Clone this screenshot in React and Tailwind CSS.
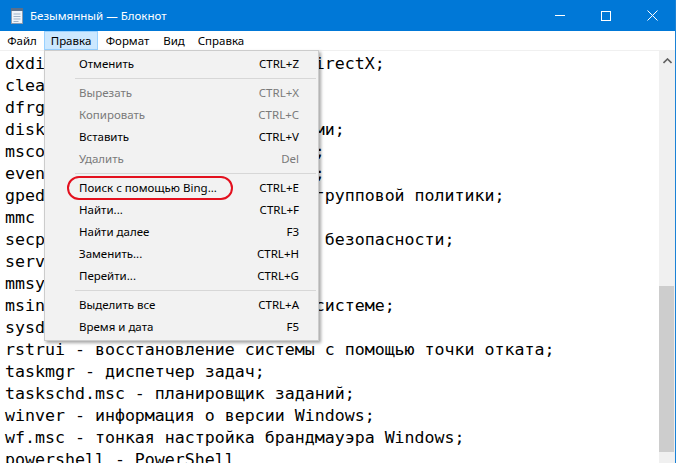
import React from 'react';

const lines = [
  'dxdiag - средство диагностики DirectX;',
  'cleanmgr - очистка диска;',
  'dfrgui - дефрагментация диска;',
  'diskmgmt.msc - управление дисками;',
  'msconfig - конфигурация системы;',
  'eventvwr.msc - просмотр событий;',
  'gpedit.msc - редактор объектов групповой политики;',
  'mmc - консоль управления;',
  'secpol.msc - локальная политика безопасности;',
  'services.msc - службы;',
  'mmsys.cpl - настройка звука;',
  'msinfo32 - просмотр сведений о системе;',
  'sysdm.cpl - свойства системы;',
  'rstrui - восстановление системы с помощью точки отката;',
  'taskmgr - диспетчер задач;',
  'taskschd.msc - планировщик заданий;',
  'winver - информация о версии Windows;',
  'wf.msc - тонкая настройка брандмауэра Windows;',
  'powershell - PowerShell',
];

const menu = [
  { label: 'Отменить', key: 'CTRL+Z' },
  { sep: true },
  { label: 'Вырезать', key: 'CTRL+X', off: true },
  { label: 'Копировать', key: 'CTRL+C', off: true },
  { label: 'Вставить', key: 'CTRL+V' },
  { label: 'Удалить', key: 'Del', off: true },
  { sep: true },
  { label: 'Поиск с помощью Bing...', key: 'CTRL+E' },
  { label: 'Найти...', key: 'CTRL+F' },
  { label: 'Найти далее', key: 'F3' },
  { label: 'Заменить...', key: 'CTRL+H' },
  { label: 'Перейти...', key: 'CTRL+G' },
  { sep: true },
  { label: 'Выделить все', key: 'CTRL+A' },
  { label: 'Время и дата', key: 'F5' },
];

function NotepadIcon() {
  return (
    <svg width="16" height="18" viewBox="0 0 16 18">
      <rect x="2.5" y="2.5" width="11" height="14" fill="#eef4fa" stroke="#8a9bb0" />
      <rect x="2" y="1" width="12" height="3" fill="#5a6f8a" />
      <line x1="4.5" y1="7" x2="11.5" y2="7" stroke="#9fb3c8" />
      <line x1="4.5" y1="9.5" x2="11.5" y2="9.5" stroke="#9fb3c8" />
      <line x1="4.5" y1="12" x2="11.5" y2="12" stroke="#9fb3c8" />
      <line x1="4.5" y1="14.5" x2="9.5" y2="14.5" stroke="#9fb3c8" />
    </svg>
  );
}

export default function App() {
  const ui = { fontFamily: '"Noto Sans", "Open Sans", sans-serif' };

  return (
    <div className="w-[676px] h-[463px] overflow-hidden bg-white flex flex-col relative border-r border-[#1a82d6]" style={ui}>
      {/* title bar */}
      <div className="h-[31px] bg-[#0078d7] flex items-center text-white shrink-0">
        <div className="pl-[9px] pr-[5px] flex items-center">
          <NotepadIcon />
        </div>
        <span className="text-[11.5px] leading-none">Безымянный — Блокнот</span>
        <div className="ml-auto flex h-full">
          <div className="w-[46px] h-full flex items-center justify-center">
            <div className="w-[10px] h-px bg-white" />
          </div>
          <div className="w-[46px] h-full flex items-center justify-center">
            <div className="w-[10px] h-[10px] border border-white" />
          </div>
          <div className="w-[46px] h-full flex items-center justify-center">
            <svg width="11" height="11" viewBox="0 0 11 11">
              <path d="M0.5 0.5 L10.5 10.5 M10.5 0.5 L0.5 10.5" stroke="white" strokeWidth="1" />
            </svg>
          </div>
        </div>
      </div>

      {/* menu bar */}
      <div className="h-[19px] flex items-stretch text-[11.5px] text-black shrink-0 pl-px">
        <div className="w-[42px] flex items-center justify-center">Файл</div>
        <div className="w-[54px] flex items-center justify-center bg-[#cce8ff] border border-[#99d1ff] ml-px">Правка</div>
        <div className="w-[59px] flex items-center justify-center">Формат</div>
        <div className="w-[34px] flex items-center justify-center">Вид</div>
        <div className="w-[60px] flex items-center justify-center">Справка</div>
      </div>
      <div className="h-px bg-[#f0f0f0] shrink-0" />

      {/* editor */}
      <div className="flex-1 flex min-h-0">
        <div
          className="flex-1 pt-[2px] pl-[5px] text-[16.6px] leading-[22px] text-black whitespace-pre overflow-hidden"
          style={{ fontFamily: '"DejaVu Sans Mono", "Liberation Mono", monospace' }}
        >
          {lines.map((l, i) => (
            <div key={i}>{l}</div>
          ))}
        </div>
        <div className="w-[16px] bg-[#f0f0f0] flex flex-col shrink-0">
          <div className="h-[20px] flex items-center justify-center">
            <svg width="9" height="6" viewBox="0 0 9 6">
              <path d="M0.5 5 L4.5 1 L8.5 5" fill="none" stroke="#606060" strokeWidth="1.6" />
            </svg>
          </div>
          <div className="h-[215px]" />
          <div className="h-[166px] w-[15px] bg-[#cdcdcd]" />
        </div>
      </div>

      {/* Правка dropdown */}
      <div className="absolute left-[44px] top-[50px] w-[275px] bg-[#f2f2f2] border border-[#cccccc] shadow-[2px_2px_3px_rgba(0,0,0,0.35)] pt-[2px] pb-[2px] text-[11.5px]">
        {menu.map((m, i) =>
          m.sep ? (
            <div key={i} className="h-[7px] flex items-center pl-[30px] pr-[2px]">
              <div className="h-px w-full bg-[#d7d7d7]" />
            </div>
          ) : (
            <div
              key={i}
              className={`h-[22px] flex items-center pl-[34px] pr-[19px] ${m.off ? 'text-[#7a7a7a]' : 'text-black'}`}
            >
              <span>{m.label}</span>
              <span className="ml-auto">{m.key}</span>
            </div>
          )
        )}
      </div>

      {/* red highlight */}
      <div className="absolute left-[67px] top-[176px] w-[166px] h-[24px] border-2 border-[#e3101e] rounded-[12px]" />
    </div>
  );
}
